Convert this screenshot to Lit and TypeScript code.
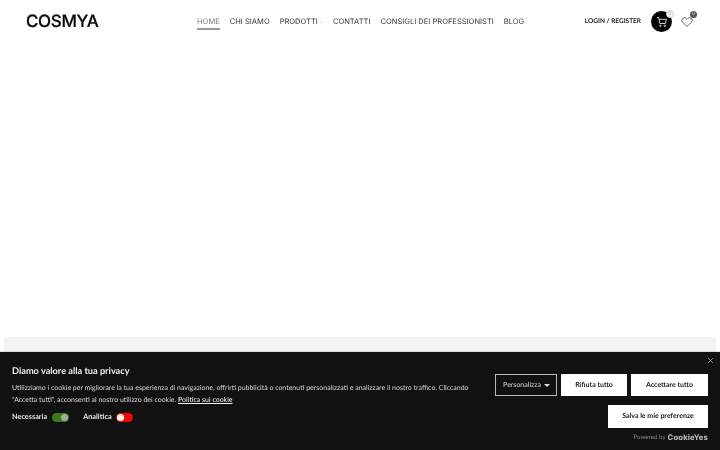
import { LitElement, html, css } from "lit";
import { customElement } from "lit/decorators.js";

@customElement("app-root")
export class AppRoot extends LitElement {
  static styles = css`
    :host { display: flex; flex-direction: column; width: 720px; height: 450px; overflow: hidden; background: #fff; font-family: "Lato", sans-serif; position: relative; text-rendering: geometricPrecision; filter: blur(0.25px); }
    header { height: 43px; display: flex; align-items: center; padding: 0 0 0 26px; flex: none; }
    .logo { font: 500 17px/1 "Inter", "Liberation Sans", sans-serif; letter-spacing: -0.35px; color: #0b0b0b; width: 171px; margin-top: 2px; -webkit-text-stroke: 0.2px #0b0b0b; }
    nav { display: flex; gap: 10px; font: 400 7.55px/1 "Inter", sans-serif; color: #333; margin-top: 1px; }
    nav span { padding: 4px 0 2px; border-bottom: 2px solid transparent; white-space: nowrap; }
    nav .on { color: #777; border-bottom-color: #999; }
    nav .car { display: inline-block; width: 3px; height: 3px; margin-left: 2px; }
    .user { margin-left: auto; display: flex; align-items: center; }
    .login { font: 700 6.5px/1 "Lato", sans-serif; color: #222; margin-right: 10px; margin-top: 1px; }
    .cart { width: 21px; height: 21px; background: #000; border-radius: 50%; position: relative; display: flex; align-items: center; justify-content: center; margin-right: 9px; margin-top: 0; }
    .cart .b { position: absolute; right: -2px; top: -1px; width: 8px; height: 8px; box-sizing: border-box; border-radius: 50%; background: #fff; border: 0.5px solid #ccc; color: #888; font: 5px/7px "Lato", sans-serif; text-align: center; }
    .heart { position: relative; width: 12px; height: 12px; margin-right: 27px; margin-top: -5px; }
    .heart .b { position: absolute; right: -4px; top: -2px; width: 7px; height: 7px; border-radius: 50%; background: #555; color: #ddd; font: 5px/7px "Lato", sans-serif; text-align: center; }
    main { flex: 1; display: flex; flex-direction: column; justify-content: flex-end; padding: 0 4px; }
    .band { height: 15px; background: #f4f4f4; }
    .banner { height: 98px; flex: none; background: #111; color: #d0d0d0; display: flex; padding: 0 12px; position: relative; box-sizing: border-box; box-shadow: 0 0 2px rgba(0,0,0,.3); }
    .left { flex: 1; padding-top: 13px; }
    h2 { margin: 0; font: 700 9.2px/12px "Lato", sans-serif; color: #eee; }
    p { margin: 5px 0 0; font: 400 6.98px/12px "Lato", sans-serif; color: #d8d8d8; width: 470px; }
    p a { color: #f4f4f4; text-decoration: underline; }
    .toggles { display: flex; align-items: center; margin-top: 5px; font: 700 7.3px/12px "Lato", sans-serif; color: #e4e4e4; }
    .sw { width: 17px; height: 9px; border-radius: 5px; margin: 0 14px 0 5px; display: flex; align-items: center; padding: 0 1px; box-sizing: border-box; }
    .sw i { width: 7px; height: 7px; border-radius: 50%; display: block; }
    .sw.g { background: #3a7a1e; justify-content: flex-end; }
    .sw.g i { background: #9db28f; }
    .sw.r { background: #f00; margin-left: 4px; }
    .sw.r i { background: #fff; }
    .right { width: 213px; flex: none; display: flex; flex-direction: column; align-items: flex-end; padding-top: 22px; }
    .row { display: flex; gap: 4px; }
    .btn { height: 22px; box-sizing: border-box; background: #fff; color: #222; font: 700 7px/22px "Lato", sans-serif; text-align: center; }
    .cust { width: 62px; background: #111; color: #d4d4d4; border: 1px solid #bbb; line-height: 20px; font-weight: 400; display: flex; align-items: center; justify-content: center; gap: 3px; padding-left: 1px; }
    .cust b { width: 0; height: 0; border: 3px solid transparent; border-top-color: #ddd; border-bottom: 0; }
    .w66 { width: 66px; }
    .w77 { width: 77px; }
    .save { width: 100px; height: 23px; margin-top: 9px; line-height: 23px; }
    .pow { display: flex; align-items: center; gap: 2px; margin-top: 5px; font: 400 6.2px/10px "Lato", sans-serif; color: #888; }
    .pow b { font: 800 7.7px/10px "Inter", sans-serif; color: #b4b4b4; letter-spacing: 0.1px; }
    .x { position: absolute; right: 7px; top: 6px; width: 5px; height: 5px; }
  `;

  render() {
    return html`
      <header>
        <div class="logo">COSMYA</div>
        <nav>
          <span class="on">HOME</span>
          <span>CHI SIAMO</span>
          <span>PRODOTTI<svg class="car" viewBox="0 0 4 4" fill="none" stroke="#bbb" stroke-width=".7"><path d="M.5 1 2 3 3.500 1" /></svg></span>
          <span>CONTATTI</span>
          <span>CONSIGLI DEI PROFESSIONISTI</span>
          <span>BLOG</span>
        </nav>
        <div class="user">
          <span class="login">LOGIN / REGISTER</span>
          <div class="cart">
            <svg width="12" height="12" viewBox="0 0 12 12" fill="none" stroke="#fff" stroke-width="0.8">
              <path d="M1 1.500h1.600l1.300 6h5.400l1.200-4.200H3.100" />
              <circle cx="4.400" cy="9.800" r=".7" /><circle cx="8.800" cy="9.800" r=".7" />
            </svg>
            <span class="b">0</span>
          </div>
          <div class="heart">
            <svg width="12" height="12" viewBox="0 0 12 12" fill="none" stroke="#444" stroke-width="0.8">
              <path d="M6 10.600 1.600 6.200a2.600 2.600 0 0 1 3.700-3.700l.7.7.7-.7a2.600 2.600 0 0 1 3.700 3.700z" />
            </svg>
            <span class="b">0</span>
          </div>
        </div>
      </header>
      <main><div class="band"></div></main>
      <section class="banner">
        <div class="left">
          <h2>Diamo valore alla tua privacy</h2>
          <p>Utilizziamo i cookie per migliorare la tua esperienza di navigazione, offrirti pubblicità o contenuti personalizzati e analizzare il nostro traffico. Cliccando "Accetta tutti", acconsenti al nostro utilizzo dei cookie. <a>Politica sui cookie</a></p>
          <div class="toggles">
            <span>Necessaria</span><span class="sw g"><i></i></span>
            <span>Analitica</span><span class="sw r"><i></i></span>
          </div>
        </div>
        <div class="right">
          <div class="row">
            <div class="btn cust">Personalizza <b></b></div>
            <div class="btn w66">Rifiuta tutto</div>
            <div class="btn w77">Accettare tutto</div>
          </div>
          <div class="btn save">Salva le mie preferenze</div>
          <div class="pow">Powered by <b>CookieYes</b></div>
        </div>
        <svg class="x" viewBox="0 0 5 5" stroke="#888" stroke-width="0.9"><path d="M0 0 5 5M5 0 0 5" /></svg>
      </section>
    `;
  }
}
